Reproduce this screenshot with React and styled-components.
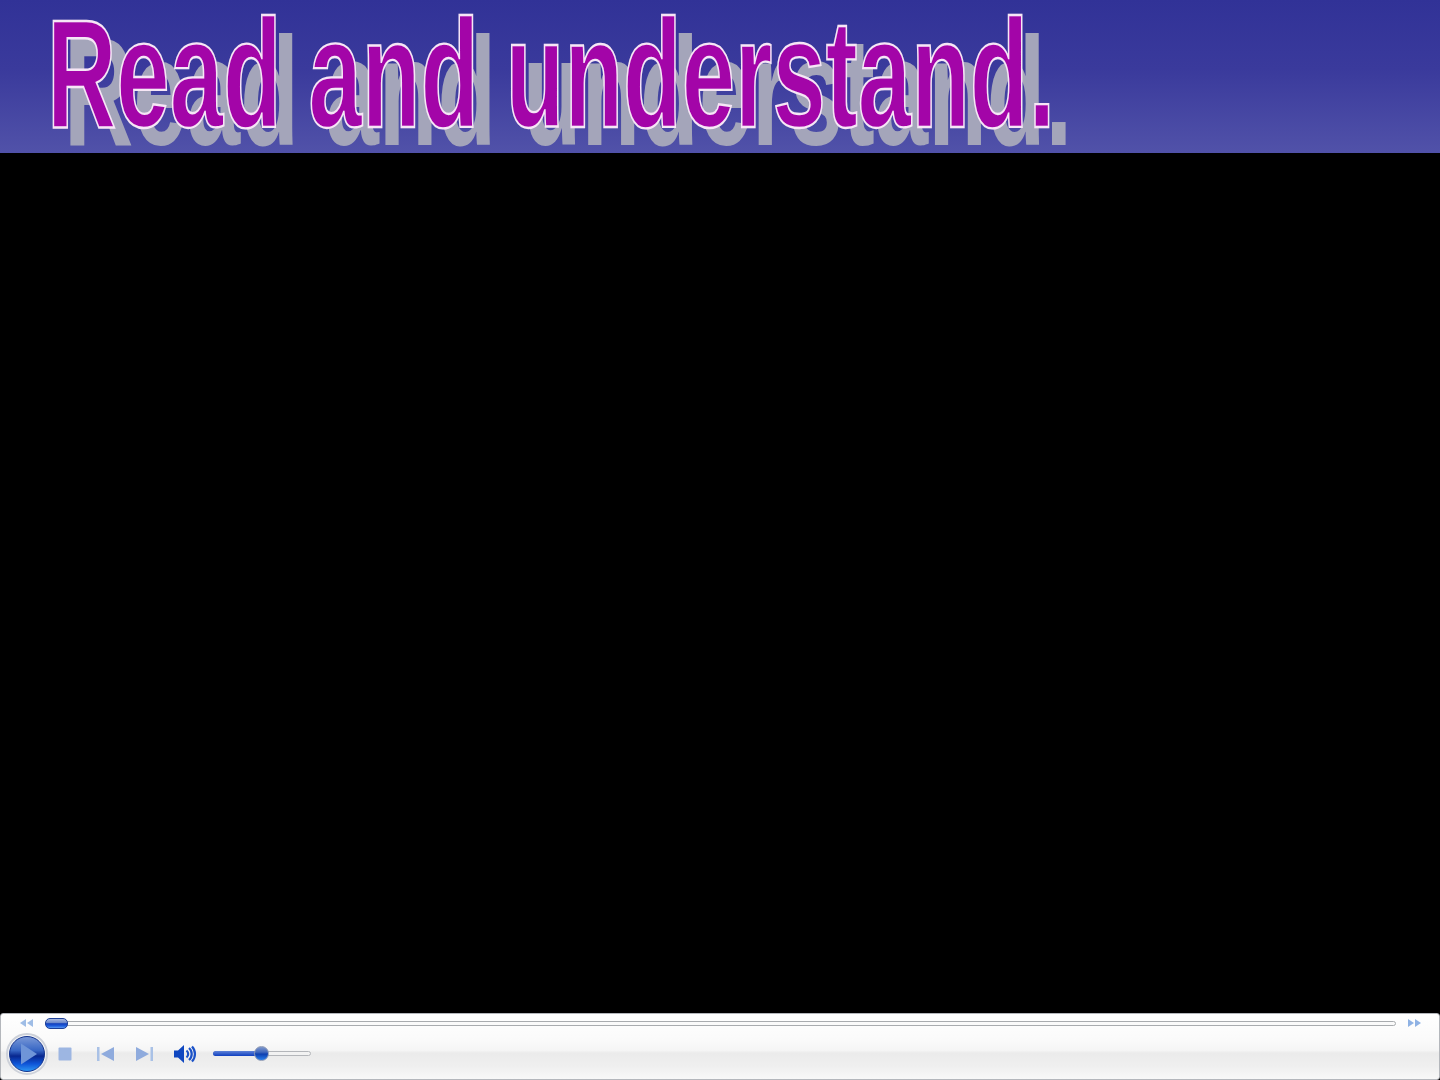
import React from 'react'
import styled, { createGlobalStyle } from 'styled-components'

const GlobalStyle = createGlobalStyle`
  html, body { margin: 0; padding: 0; background: #000; }
  #root { height: 1080px; }
`

const Page = styled.div`
  width: 1440px;
  height: 1080px;
  display: flex;
  flex-direction: column;
  background: #000;
`

const Banner = styled.header`
  height: 153px;
  flex: none;
  background: linear-gradient(180deg, #313297 0%, #3a3a9c 45%, #5152a9 100%);
  padding-left: 47px;
`

// wordart look: small text stretched up to the banner height
const Title = styled.h1`
  margin: 0;
  width: max-content;
  font: 700 80px/78px 'Liberation Sans', Arial, sans-serif;
  white-space: nowrap;
  color: #a305a8;
  -webkit-text-stroke: 1.2px #f6e6f6;
  text-shadow: 14.2px 9.3px 0 #a4a5ba;
  transform-origin: 0 0;
  transform: scale(1.2, 1.92);
`

// sits above the banner so the title's shadow stops at the banner edge
const Stage = styled.main`
  flex: 1;
  position: relative;
  background: #000;
`

const Player = styled.footer`
  height: 67px;
  flex: none;
  box-sizing: border-box;
  border: 1px solid #b4b7bc;
  border-radius: 3px;
  background: linear-gradient(180deg, #fff 0%, #fafafa 40%, #f5f5f5 56%, #ebebeb 60%, #efefef 80%, #f8f8f8 100%);
  display: flex;
  flex-direction: column;
  filter: blur(0.4px);
`

const SeekRow = styled.div`
  height: 18px;
  padding: 0 18px 0 19px;
  display: flex;
  align-items: center;
  gap: 11px;
  flex: none;
`

const SeekTrack = styled.div`
  flex: 1;
  height: 3px;
  border: 1px solid #a9acaf;
  border-radius: 3px;
  background: #fafafa;
  position: relative;
`

const SeekThumb = styled.div`
  position: absolute;
  left: -1px;
  top: -4px;
  width: 23px;
  height: 11px;
  box-sizing: border-box;
  border: 1px solid #1c3f98;
  border-radius: 5px;
  background: linear-gradient(180deg, #a9b9e0 0%, #6c88ca 42%, #123fbd 52%, #1f5fe0 78%, #5f9bf0 100%);
`

const ControlRow = styled.div`
  flex: 1;
  padding-left: 5px;
  margin-top: -3px;
  display: flex;
  align-items: center;
`

const PlayButton = styled.div`
  width: 42px;
  height: 42px;
  flex: none;
  box-sizing: border-box;
  border: 2px solid #cdd1d9;
  border-radius: 50%;
  background: #f4f5f7;
  display: flex;
  align-items: center;
  justify-content: center;
`

const IconSlot = styled.div`
  flex: none;
  display: flex;
  margin-left: ${p => p.$gap}px;
`

const VolumeTrack = styled.div`
  width: 96px;
  height: 3px;
  flex: none;
  margin-left: 15px;
  margin-bottom: 1px;
  border: 1px solid #b4b6ba;
  border-radius: 3px;
  background: #f2f2f2;
  position: relative;
`

const VolumeFill = styled.div`
  position: absolute;
  left: -1px;
  top: -1px;
  height: 5px;
  width: 46px;
  border-radius: 3px;
  background: linear-gradient(180deg, #5f83d8, #0f3fc0);
`

const VolumeThumb = styled.div`
  position: absolute;
  left: 40px;
  top: -6px;
  width: 15px;
  height: 15px;
  box-sizing: border-box;
  border: 1px solid #8d99b5;
  border-radius: 50%;
  background: linear-gradient(180deg, #7f98cc 0%, #3f66bc 40%, #0e3fb0 55%, #2a80ec 100%);
`

const App = () => {
  return (
    <Page>
      <GlobalStyle />
      <Banner>
        <Title>Read and understand.</Title>
      </Banner>
      <Stage />
      <Player>
        <SeekRow>
          <svg width="14" height="8" viewBox="0 0 14 8">
            <path d="M6 0v8L0 4zM13 0v8L7 4z" fill="#9fbde6" />
          </svg>
          <SeekTrack>
            <SeekThumb />
          </SeekTrack>
          <svg width="14" height="8" viewBox="0 0 14 8">
            <path d="M1 0v8l6-4zM8 0v8l6-4z" fill="#8fb2e4" />
          </svg>
        </SeekRow>
        <ControlRow>
          <PlayButton>
            <svg width="36" height="36" viewBox="0 0 36 36">
              <defs>
                <linearGradient id="orb" x1="0" y1="0" x2="0" y2="1">
                  <stop offset="0" stopColor="#7c9ad8" />
                  <stop offset="0.4" stopColor="#3766c4" />
                  <stop offset="0.56" stopColor="#08278f" />
                  <stop offset="0.78" stopColor="#0f55d8" />
                  <stop offset="1" stopColor="#2f9af4" />
                </linearGradient>
              </defs>
              <circle cx="18" cy="18" r="17.5" fill="url(#orb)" stroke="#16358c" />
              <path d="M12 7.5 L28 18 L12 28.5 Z" fill="#6f95d8" />
            </svg>
          </PlayButton>
          <IconSlot $gap={10}>
            <svg width="14" height="14" viewBox="0 0 14 14">
              <rect x="0.5" y="0.5" width="13" height="13" rx="1" fill="#9db6e2" />
            </svg>
          </IconSlot>
          <IconSlot $gap={25}>
            <svg width="18" height="14" viewBox="0 0 18 14">
              <path d="M0 0h2.5v14H0z" fill="#a9c1e6" />
              <path d="M17 0v14L4 7z" fill="#8fabdd" />
            </svg>
          </IconSlot>
          <IconSlot $gap={20}>
            <svg width="18" height="14" viewBox="0 0 18 14">
              <path d="M1 0v14l13-7z" fill="#8fabdd" />
              <path d="M15.5 0H18v14h-2.5z" fill="#a9c1e6" />
            </svg>
          </IconSlot>
          <IconSlot $gap={21}>
            <svg width="24" height="20" viewBox="0 0 24 20">
              <path d="M0 6.5h4L10 1v18l-6-5.5H0z" fill="#0f47c0" />
              <path d="M12.5 6.5a4.5 4.5 0 0 1 0 7M15 4a8 8 0 0 1 0 12M18 2.5a11 11 0 0 1 0 15" fill="none" stroke="#1b52c8" strokeWidth="2.2" />
            </svg>
          </IconSlot>
          <VolumeTrack>
            <VolumeFill />
            <VolumeThumb />
          </VolumeTrack>
        </ControlRow>
      </Player>
    </Page>
  )
}

export default App
